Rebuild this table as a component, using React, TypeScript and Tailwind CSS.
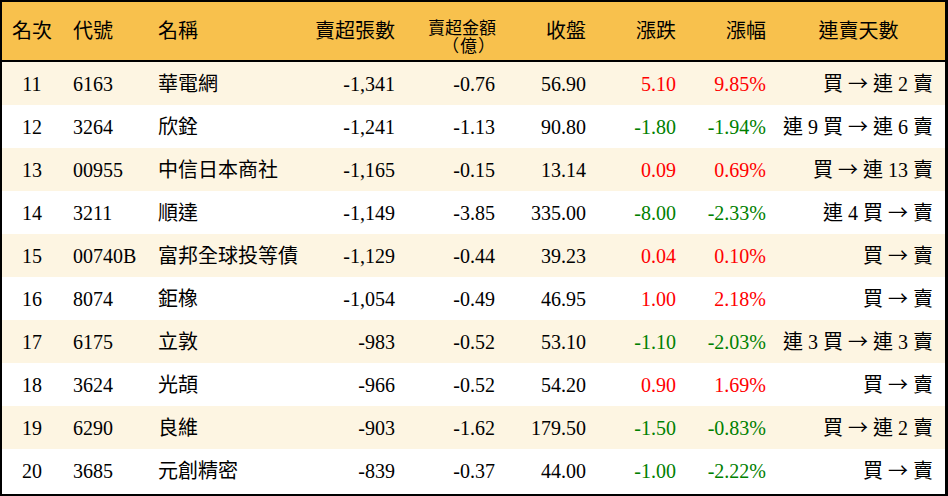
import React from 'react';

type Row = {
    rank: number;
    code: string;
    name: string;
    lots: string;
    amount: string;
    close: string;
    change: string;
    pct: string;
    streak: [string, string];
};

const rows: Row[] = [
    { rank: 11, code: '6163', name: '華電網', lots: '-1,341', amount: '-0.76', close: '56.90', change: '5.10', pct: '9.85%', streak: ['買', '連 2 賣'] },
    { rank: 12, code: '3264', name: '欣銓', lots: '-1,241', amount: '-1.13', close: '90.80', change: '-1.80', pct: '-1.94%', streak: ['連 9 買', '連 6 賣'] },
    { rank: 13, code: '00955', name: '中信日本商社', lots: '-1,165', amount: '-0.15', close: '13.14', change: '0.09', pct: '0.69%', streak: ['買', '連 13 賣'] },
    { rank: 14, code: '3211', name: '順達', lots: '-1,149', amount: '-3.85', close: '335.00', change: '-8.00', pct: '-2.33%', streak: ['連 4 買', '賣'] },
    { rank: 15, code: '00740B', name: '富邦全球投等債', lots: '-1,129', amount: '-0.44', close: '39.23', change: '0.04', pct: '0.10%', streak: ['買', '賣'] },
    { rank: 16, code: '8074', name: '鉅橡', lots: '-1,054', amount: '-0.49', close: '46.95', change: '1.00', pct: '2.18%', streak: ['買', '賣'] },
    { rank: 17, code: '6175', name: '立敦', lots: '-983', amount: '-0.52', close: '53.10', change: '-1.10', pct: '-2.03%', streak: ['連 3 買', '連 3 賣'] },
    { rank: 18, code: '3624', name: '光頡', lots: '-966', amount: '-0.52', close: '54.20', change: '0.90', pct: '1.69%', streak: ['買', '賣'] },
    { rank: 19, code: '6290', name: '良維', lots: '-903', amount: '-1.62', close: '179.50', change: '-1.50', pct: '-0.83%', streak: ['買', '連 2 賣'] },
    { rank: 20, code: '3685', name: '元創精密', lots: '-839', amount: '-0.37', close: '44.00', change: '-1.00', pct: '-2.22%', streak: ['買', '賣'] },
];

const cols = 'grid grid-cols-[60px_90px_148px_100px_100px_90px_90px_90px_1fr]';

export default function App() {
    return (
        <div
            className="w-[948px] h-[496px] bg-white text-black text-[20px] leading-none"
            style={{ fontFamily: '"Liberation Serif", "Noto Sans CJK TC", serif' }}
        >
            <div className="w-full h-full border-2 border-r-[3px] border-black flex flex-col">
                {/* Header */}
                <div className={`${cols} h-[60px] bg-[#f8c14d] border-b-2 border-black items-center shrink-0`}>
                    <div className="text-center">名次</div>
                    <div className="pl-[11px]">代號</div>
                    <div className="pl-[6px]">名稱</div>
                    <div className="text-right pr-[5px]">賣超張數</div>
                    <div className="self-start pt-[18px] text-right pr-[4px] text-[17px] leading-[18px] whitespace-nowrap">
                        <div>賣超金額</div>
                        <div className="tracking-[1px]">（億）</div>
                    </div>
                    <div className="text-right pr-[4px]">收盤</div>
                    <div className="text-right pr-[4px]">漲跌</div>
                    <div className="text-right pr-[4px]">漲幅</div>
                    <div className="text-center pl-[2px]">連賣天數</div>
                </div>

                {/* Rows */}
                {rows.map((r, i) => {
                    const up = !r.change.startsWith('-');
                    const tone = up ? 'text-[#ff0000]' : 'text-[#008000]';
                    return (
                        <div
                            key={r.rank}
                            className={`${cols} h-[43px] items-center ${i % 2 === 0 ? 'bg-[#fdf5e2]' : 'bg-white'}`}
                        >
                            <div className="text-center">{r.rank}</div>
                            <div className="pl-[11px]">{r.code}</div>
                            <div className="pl-[6px] whitespace-nowrap">{r.name}</div>
                            <div className="text-right pr-[5px]">{r.lots}</div>
                            <div className="text-right pr-[5px]">{r.amount}</div>
                            <div className="text-right pr-[4px]">{r.close}</div>
                            <div className={`text-right pr-[4px] ${tone}`}>{r.change}</div>
                            <div className={`text-right pr-[4px] ${tone}`}>{r.pct}</div>
                            <div className="text-right pr-[12px] whitespace-nowrap">
                                {r.streak[0]}
                                <span className="font-['Noto_Sans_CJK_TC'] mx-[5px]">→</span>
                                {r.streak[1]}
                            </div>
                        </div>
                    );
                })}
            </div>
        </div>
    );
}
